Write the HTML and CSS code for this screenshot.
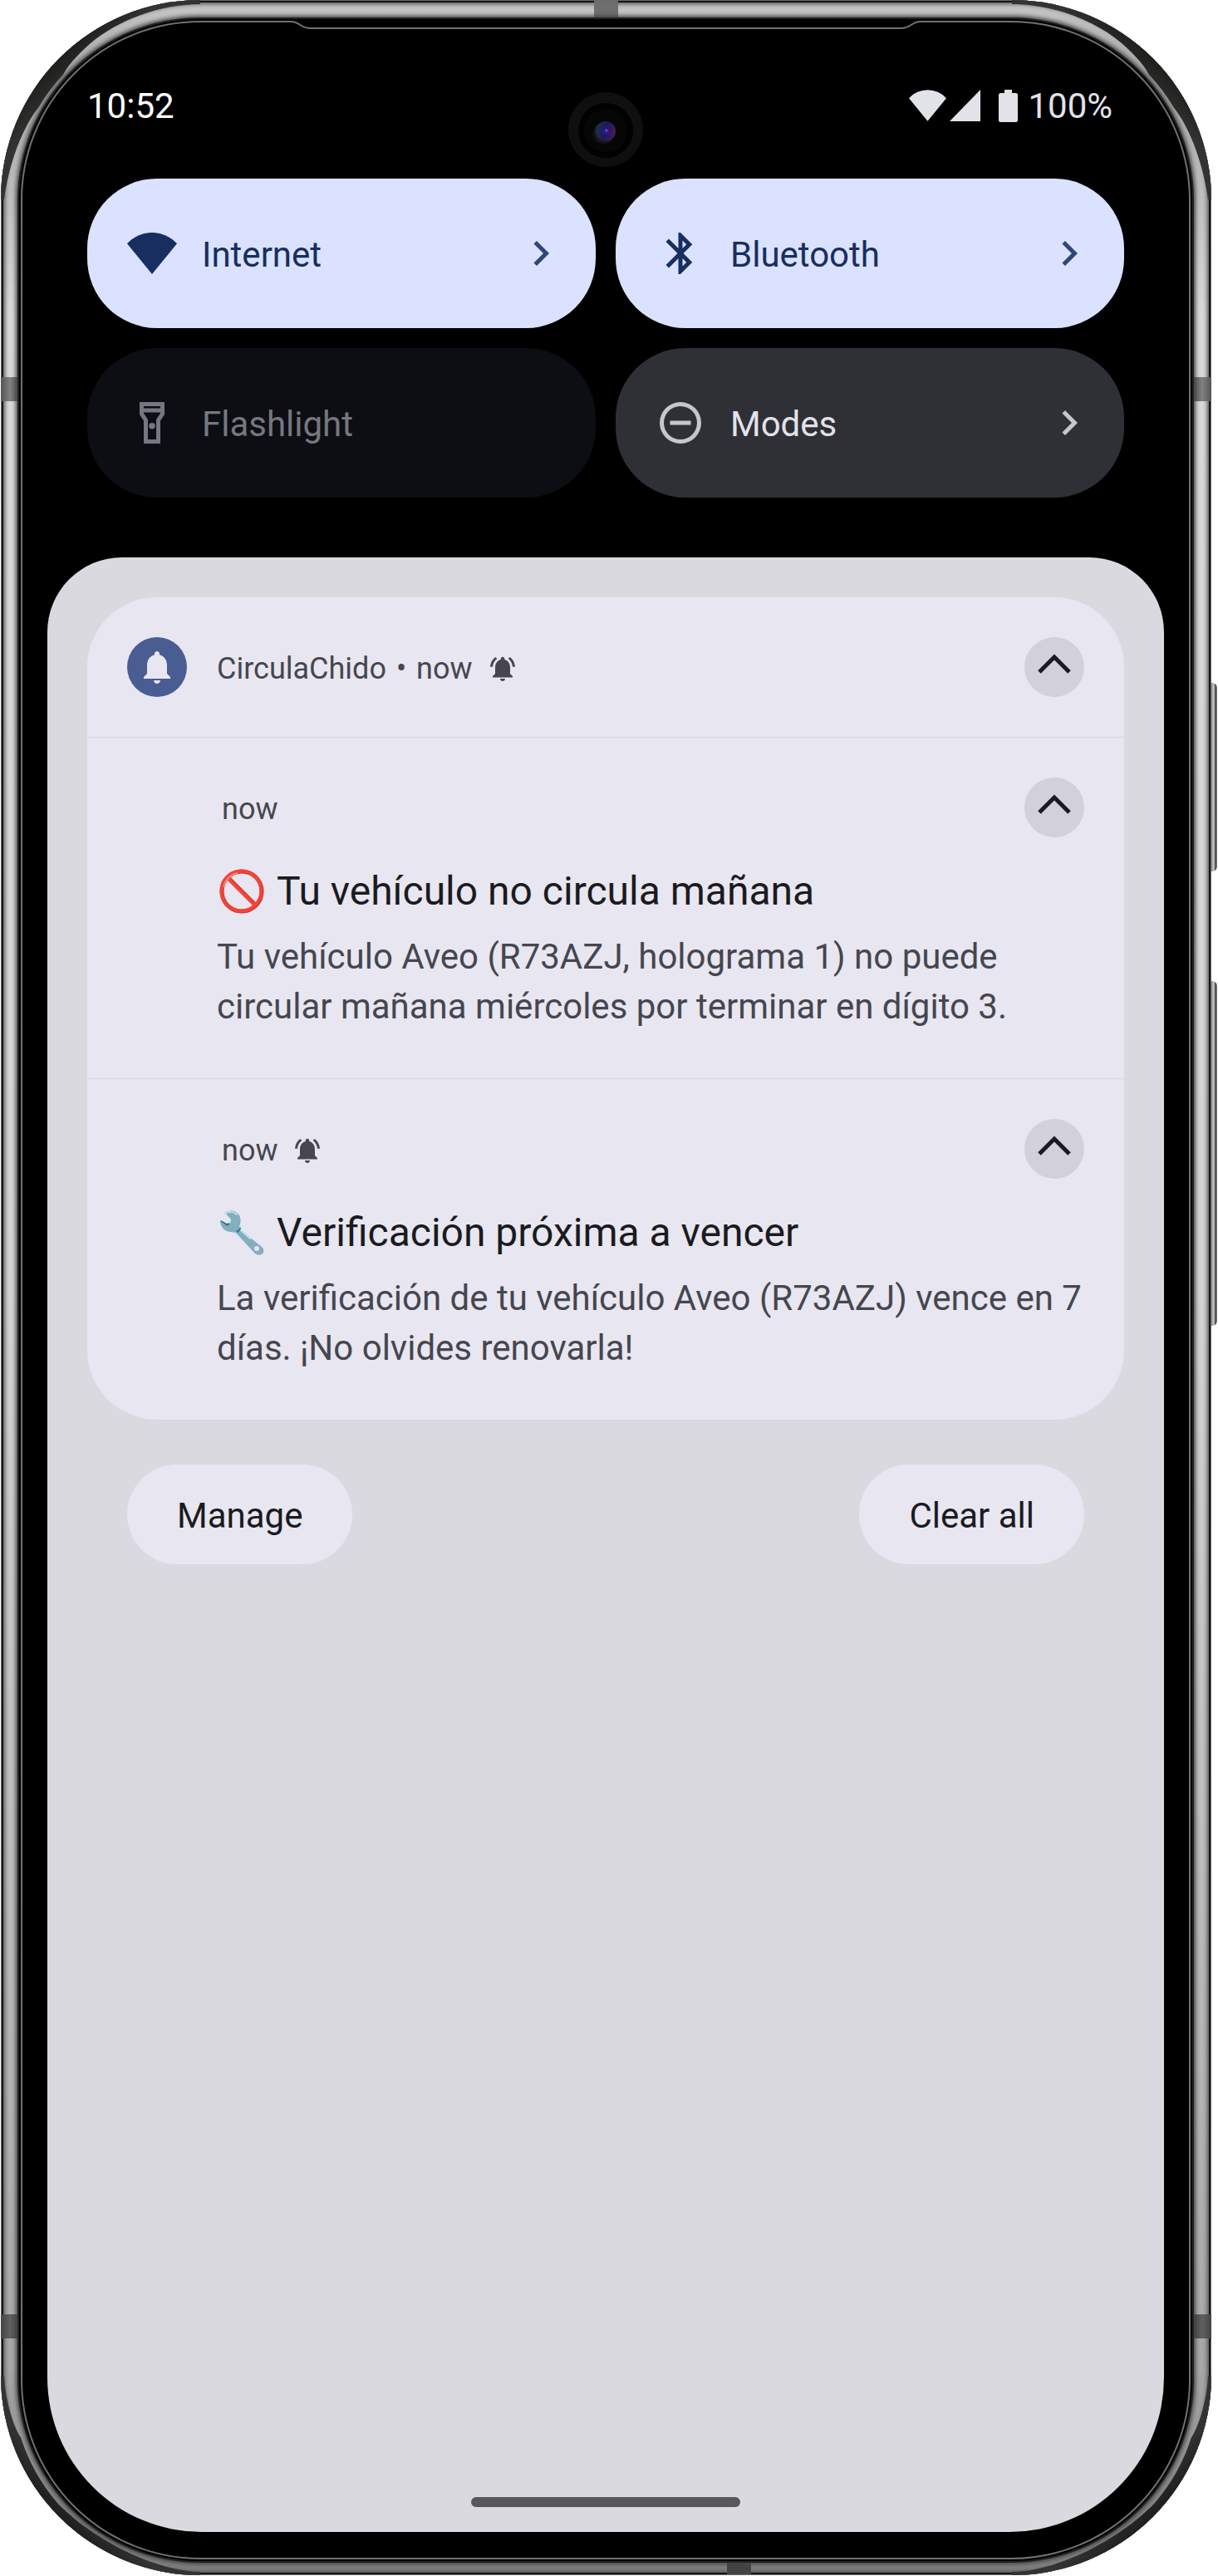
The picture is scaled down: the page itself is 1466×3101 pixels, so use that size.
FILE: index.html
```html
<!DOCTYPE html>
<html lang="es">
<head>
<meta charset="utf-8">
<meta name="viewport" content="width=device-width, initial-scale=1">
<title>CirculaChido</title>
<link rel="stylesheet" href="styles.css">
</head>
<body>
<svg width="0" height="0" class="defs" aria-hidden="true">
  <defs>
    <linearGradient id="corner-shade" x1="0" y1="0" x2="1" y2="1">
      <stop offset="0.2" stop-color="#0c0c0c"/>
      <stop offset="0.4" stop-color="#333331"/>
    </linearGradient>
    <linearGradient id="lens" x1="0" y1="0.4" x2="1" y2="0.6">
      <stop offset="0" stop-color="#1c3440"/>
      <stop offset="0.5" stop-color="#1c1860"/>
      <stop offset="1" stop-color="#4a1c50"/>
    </linearGradient>
    <symbol id="chevron" viewBox="0 0 24 24"><path d="M10 6 8.59 7.41 13.17 12l-4.58 4.59L10 18l6-6z"/></symbol>
    <symbol id="wifi" viewBox="0 0 24 20"><path d="M12 20 0 5.3A16.2 16.2 0 0 1 24 5.3z"/></symbol>
    <symbol id="collapse" viewBox="0 0 72 72"><path d="M18 42 36 24 54 42" fill="none" stroke="currentColor" stroke-width="5"/></symbol>
    <symbol id="ringing" viewBox="0 0 24 24"><path d="M7.58 4.08 6.15 2.65C3.75 4.48 2.17 7.3 2.03 10.5h2c.15-2.65 1.51-4.97 3.55-6.42zm12.39 6.42h2c-.15-3.2-1.73-6.02-4.12-7.85l-1.42 1.43c2.02 1.45 3.39 3.77 3.54 6.42zM18 11c0-3.07-1.64-5.64-4.5-6.32V4c0-.83-.67-1.5-1.5-1.5s-1.5.67-1.5 1.5v.68C7.63 5.36 6 7.92 6 11v5l-2 2v1h16v-1l-2-2v-5zm-6 11c1.1 0 2-.9 2-2h-4c0 1.1.89 2 2 2z"/></symbol>
    <symbol id="corner-top" viewBox="0 0 250 250"><path fill="url(#corner-shade)" d="M0 240A240 240 0 0 1 240 0V5C190 5 140 25 108 52 90 68 80 80 75 90A222 222 0 0 0 45 130C36 140 12 180 4 240z"/></symbol>
    <symbol id="corner-bottom" viewBox="0 0 250 250"><path fill="url(#corner-shade)" d="M0 240A240 240 0 0 1 240 0V4C180 5 105 48 68 87A228 228 0 0 0 24 166C14 180 5 215 4 240z"/></symbol>
  </defs>
</svg>

<div class="phone">
  <svg class="corner corner-tl" aria-hidden="true"><use href="#corner-top"/></svg>
  <svg class="corner corner-tr" aria-hidden="true"><use href="#corner-top"/></svg>
  <svg class="corner corner-bl" aria-hidden="true"><use href="#corner-bottom"/></svg>
  <svg class="corner corner-br" aria-hidden="true"><use href="#corner-bottom"/></svg>
  <i class="antenna antenna-top"></i>
  <i class="antenna antenna-bottom"></i>
  <i class="antenna antenna-side antenna-left antenna-high"></i>
  <i class="antenna antenna-side antenna-right antenna-high"></i>
  <i class="antenna antenna-side antenna-left antenna-low"></i>
  <i class="antenna antenna-side antenna-right antenna-low"></i>
  <i class="key key-power"></i>
  <i class="key key-volume"></i>

  <div class="bezel">
    <div class="earpiece">
      <svg width="24" height="11" viewBox="0 0 24 11"><path d="M0 1c12 0 10 8 24 8" fill="none" stroke="#707070" stroke-width="2"/></svg>
      <span></span>
      <svg width="24" height="11" viewBox="0 0 24 11"><path d="M24 1c-12 0-10 8-24 8" fill="none" stroke="#707070" stroke-width="2"/></svg>
    </div>
    <svg class="camera" viewBox="0 0 90 90" aria-hidden="true">
      <circle cx="45" cy="45" r="45" fill="#0f0f0f"/>
      <circle cx="45" cy="46" r="33" fill="#010101"/>
      <circle cx="45" cy="46" r="26" fill="#060606"/>
      <circle cx="43" cy="49" r="13" fill="#151515"/>
      <circle cx="45" cy="47" r="12" fill="url(#lens)"/>
      <circle cx="45" cy="47" r="4" fill="#2a1a80"/>
      <circle cx="46" cy="46" r="1.500" fill="#6a50ff"/>
    </svg>

    <header class="status">
      <time>10:52</time>
      <div class="status-icons">
        <svg class="status-wifi" width="45" height="38"><use href="#wifi"/></svg>
        <svg class="status-signal" width="37" height="38" viewBox="0 0 37 38"><path d="M37 0v38H0z"/></svg>
        <svg class="status-battery" width="23" height="39" viewBox="0 0 23 39"><path d="M7 0h9v4h4.500a2.500 2.500 0 0 1 2.500 2.500v30a2.500 2.500 0 0 1-2.500 2.500h-18A2.500 2.500 0 0 1 0 36.500v-30A2.500 2.500 0 0 1 2.500 4H7z"/></svg>
        <span>100%</span>
      </div>
    </header>

    <section class="tiles">
      <button type="button" class="tile tile-on">
        <svg class="icon" viewBox="0 0 24 24"><use href="#wifi" y="2" width="24" height="20"/></svg>
        <span>Internet</span>
        <svg class="icon more"><use href="#chevron"/></svg>
      </button>
      <button type="button" class="tile tile-on">
        <svg class="icon" viewBox="0 0 24 24"><path d="M17.710 7.710 12 2h-1v7.590L6.410 5 5 6.410 10.590 12 5 17.590 6.410 19 11 14.410V22h1l5.710-5.710-4.300-4.290 4.300-4.290zM13 5.830l1.880 1.880L13 9.590V5.830zm1.880 10.460L13 18.170v-3.760l1.880 1.880z"/></svg>
        <span>Bluetooth</span>
        <svg class="icon more"><use href="#chevron"/></svg>
      </button>
      <button type="button" class="tile tile-disabled" disabled>
        <svg class="icon" viewBox="0 0 24 24"><path d="M18 2H6v6l2 3v11h8V11l2-3V2zm-2 2v1H8V4h8zm-2 6.400V20h-4v-9.610l-2-3V7h8v.39l-2 3.010z"/><circle cx="12" cy="13.500" r="1.500"/></svg>
        <span>Flashlight</span>
      </button>
      <button type="button" class="tile">
        <svg class="icon" viewBox="0 0 24 24"><path d="M7 11h10v2H7zM12 2a10 10 0 1 0 0 20 10 10 0 0 0 0-20zm0 18a8 8 0 1 1 0-16 8 8 0 0 1 0 16z"/></svg>
        <span>Modes</span>
        <svg class="icon more"><use href="#chevron"/></svg>
      </button>
    </section>

    <main class="shade">
      <section class="group">
        <div class="group-head">
          <svg class="app" viewBox="-12 -12 72 72"><path transform="scale(2)" d="M12 22c1.100 0 2-.9 2-2h-4c0 1.100.89 2 2 2zm6-6v-5c0-3.070-1.640-5.640-4.500-6.320V4c0-.83-.67-1.500-1.500-1.500s-1.500.67-1.500 1.500v.68C7.630 5.360 6 7.920 6 11v5l-2 2v1h16v-1l-2-2z"/></svg>
          <p class="meta"><span>CirculaChido</span><span>•</span><span>now</span><svg class="bell"><use href="#ringing"/></svg></p>
          <button type="button" class="toggle" aria-label="Collapse group"><svg><use href="#collapse"/></svg></button>
        </div>
        <article class="note">
          <div class="note-head">
            <p class="meta">now</p>
            <button type="button" class="toggle" aria-label="Collapse"><svg><use href="#collapse"/></svg></button>
          </div>
          <h2>
            <svg class="emoji" viewBox="0 0 54 54"><g fill="none" stroke="#c62f31" stroke-width="5"><circle cx="27" cy="27" r="24"/><path d="M11 11 43 43"/></g><g fill="none" stroke="#f44336" stroke-width="4"><circle cx="26.500" cy="26.500" r="24"/><path d="M10 11 42 43"/></g><path d="M5 21C8 12 13 7 21 5" fill="none" stroke="#ff7e74" stroke-width="2" stroke-linecap="round"/></svg>
            Tu vehículo no circula mañana
          </h2>
          <p class="text">Tu vehículo Aveo (R73AZJ, holograma 1) no puede circular mañana miércoles por terminar en dígito 3.</p>
        </article>
        <article class="note">
          <div class="note-head">
            <p class="meta"><span>now</span><svg class="bell"><use href="#ringing"/></svg></p>
            <button type="button" class="toggle" aria-label="Collapse"><svg><use href="#collapse"/></svg></button>
          </div>
          <h2>
            <svg class="emoji" viewBox="0 0 54 54"><path fill="#82aec0" fill-rule="evenodd" d="M7 3C12-1 20 0 24 6c2 4 2 9 0 13l1 4 26 21c3 3 3 6 1 8-3 3-7 2-10-1L20 27l-6-1C7 26 2 21 1 14v-1l8 6 4-2 1-6zM45 43a3 3 0 1 0 0 6 3 3 0 0 0 0-6z"/><path d="m1 13 8 6 4-2-1-2-3 1-7-4z" fill="#2f7889"/><path d="M20 25c3-1 5-3 5-6l1 4-4 4z" fill="#2f7889"/><path d="M7 4c4-3 10-3 14 1M26 24 37 34" stroke="#b9e4ea" stroke-width="2" fill="none" stroke-linecap="round"/></svg>
            Verificación próxima a vencer
          </h2>
          <p class="text">La verificación de tu vehículo Aveo (R73AZJ) vence en 7 días. ¡No olvides renovarla!</p>
        </article>
      </section>
      <div class="actions">
        <button type="button">Manage</button>
        <button type="button">Clear all</button>
      </div>
      <div class="home-bar"></div>
    </main>
  </div>
</div>
</body>
</html>
```
FILE: styles.css
```css
* {
  box-sizing: border-box;
}

body {
  margin: 0;
  background: #fff;
  font-family: Roboto, "Liberation Sans", sans-serif;
}

h2, p {
  margin: 0;
  font-weight: 400;
}

svg {
  display: block;
  flex: none;
  fill: currentColor;
}

button {
  border: 0;
  padding: 0;
  font: inherit;
  color: inherit;
}

.defs {
  position: absolute;
}

/* Device frame */
.phone {
  position: relative;
  display: flex;
  min-height: calc(100vh - 1px);
  margin: 0 8px 1px 1px;
  padding: 25px 25px 19px 24px;
  border-radius: 240px;
  background: linear-gradient(#c8c8c8, #a4a4a4 3%, #d8d8d8 12%, #d4d4d4 50%, #a8a8a8 92%, #828282 98%);
  box-shadow:
    inset 0 0 0 1px #6a6a6a,
    inset 0 0 0 3px #151515,
    inset 0 0 5px 5px #555;
}

.bezel {
  position: relative;
  flex: 1;
  min-width: 0;
  display: flex;
  flex-direction: column;
  padding: 70px 30px 31px;
  border: 2px solid #707070;
  border-radius: 216px;
  background: #000;
  box-shadow: 0 0 0 2px #000, 0 0 0 4px #222, 0 0 5px 6px #444;
}

.corner {
  position: absolute;
  width: 250px;
  height: 250px;
}

.corner-tl { top: 0; left: 0; }
.corner-tr { top: 0; right: 0; transform: scaleX(-1); }
.corner-bl { bottom: 0; left: 0; transform: scaleY(-1); }
.corner-br { bottom: 0; right: 0; transform: scale(-1); }

.antenna {
  position: absolute;
  background: #6e6e6e;
}

.antenna-top { top: 1px; left: 49%; width: 29px; height: 22px; }
.antenna-bottom { bottom: 1px; left: 60%; width: 29px; height: 16px; background: #444; }
.antenna-side { width: 22px; height: 29px; background: linear-gradient(90deg, #555, #808080, #555); }
.antenna-left { left: 0; }
.antenna-right { right: 0; }
.antenna-high { top: 454px; }
.antenna-low { bottom: 285px; background: linear-gradient(90deg, #444, #606060, #444); }

.key {
  position: absolute;
  left: 100%;
  width: 7px;
  border-radius: 0 6px 6px 0;
  background: linear-gradient(90deg, #777, #c8c8c8 30%, #aaa 50%, #333 75%, #999);
}

.key-power { top: 822px; height: 227px; }
.key-volume { top: 1181px; height: 415px; }

.earpiece {
  position: absolute;
  top: -2px;
  left: 23%;
  right: 23%;
  display: flex;
  align-items: flex-end;
  background: #000;
}

.earpiece span {
  flex: 1;
  height: 3px;
  border-top: 2px solid #707070;
}

.camera {
  position: absolute;
  top: 84px;
  left: calc(50% - 45px);
  width: 90px;
  height: 90px;
}

/* Status bar */
.status {
  display: flex;
  justify-content: space-between;
  align-items: center;
  height: 60px;
  margin-bottom: 58px;
  padding: 0 62px 0 48px;
  font-size: 42px;
  color: #fff;
}

.status-icons {
  display: flex;
  align-items: center;
  color: #e2e2e9;
}

.status-signal { margin-left: 4px; }
.status-battery { margin: 0 12px 0 22px; }

/* Quick settings */
.tiles {
  display: grid;
  grid-template-columns: 1fr 1fr;
  gap: 24px;
  margin: 0 48px 72px;
}

.tile {
  display: flex;
  align-items: center;
  gap: 30px;
  height: 180px;
  padding: 0 36px 0 48px;
  border-radius: 84px;
  background: #2f3036;
  color: #e2e2e9;
  font-size: 42px;
}

.tile span {
  padding-top: 2px;
}

.tile .icon {
  width: 60px;
  height: 60px;
  color: #c5c6d0;
}

.tile .more {
  margin-left: auto;
}

.tile-on { background: #dae2ff; color: #182e60; }
.tile-on .icon { color: #182e60; }
.tile-on .more { color: #304578; }
.tile-disabled { background: #0c0e13; color: #76777f; }
.tile-disabled .icon { color: #757780; }

/* Notification shade */
.shade {
  flex: 1;
  display: flex;
  flex-direction: column;
  padding: 48px 48px 30px;
  border-radius: 90px 90px 186px 186px;
  background: #dad9e0;
}

.group {
  border-radius: 84px;
  background: #e8e6f0;
  color: #45464f;
}

.group-head {
  display: flex;
  align-items: center;
  gap: 36px;
  padding: 48px;
}

.app {
  width: 72px;
  height: 72px;
  border-radius: 50%;
  background: #4a5d92;
  color: #e8e6f0;
}

.meta {
  display: flex;
  align-items: center;
  gap: 12px;
  padding-top: 4px;
  font-size: 36px;
}

.bell {
  width: 36px;
  height: 36px;
  margin-left: 6px;
}

.toggle {
  width: 72px;
  height: 72px;
  margin-left: auto;
  border-radius: 50%;
  background: #d2d0da;
  color: #1a1b20;
}

.toggle svg {
  width: 72px;
  height: 72px;
}

.note {
  padding: 48px 48px 56px 156px;
  border-top: 1px solid #d9d8df;
}

.note-head {
  display: flex;
  align-items: center;
  margin-bottom: 35px;
  padding-left: 6px;
}

.note h2 {
  display: flex;
  align-items: center;
  gap: 15px;
  margin-bottom: 19px;
  padding-left: 3px;
  font-size: 48px;
  line-height: 60px;
  color: #1a1b20;
}

.emoji {
  width: 54px;
  height: 54px;
}

.text {
  font-size: 42px;
  line-height: 60px;
}

.actions {
  display: flex;
  justify-content: space-between;
  margin: 54px 48px;
}

.actions button {
  height: 120px;
  padding: 2px 60px 0;
  border-radius: 60px;
  background: #e8e6f0;
  color: #1a1b20;
  font-size: 42px;
}

.home-bar {
  width: 324px;
  height: 12px;
  margin: auto auto 0;
  border-radius: 6px;
  background: #58585b;
}
```
